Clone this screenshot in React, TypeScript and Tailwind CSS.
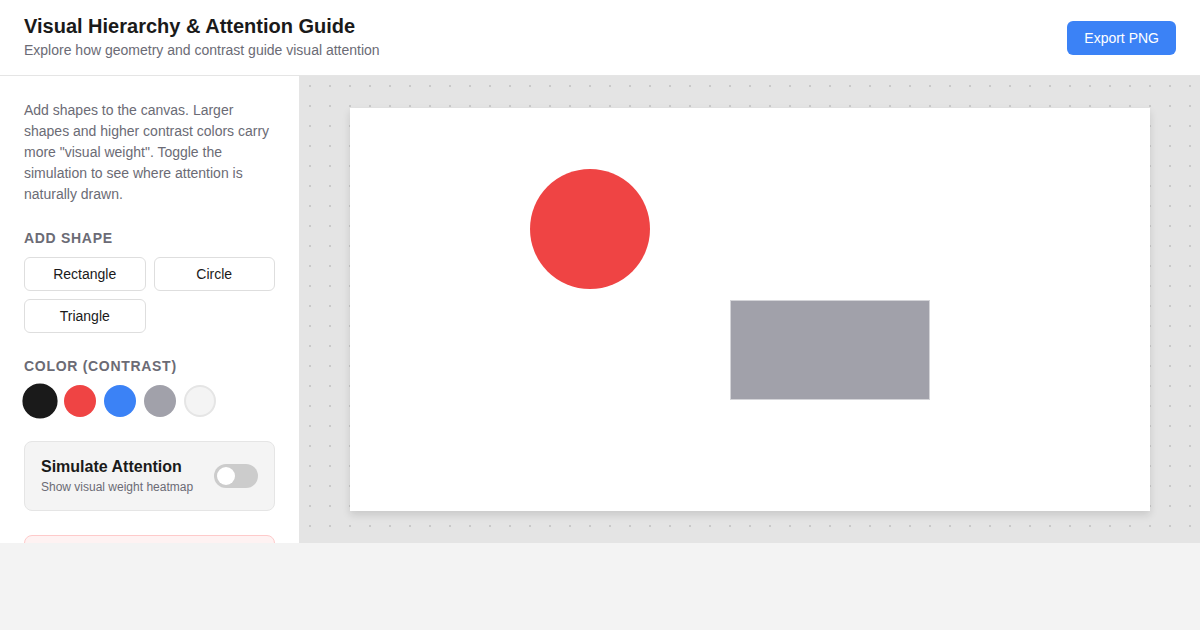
import React from "react";

export default function App() {
  const font = { fontFamily: '"Liberation Sans", Arial, sans-serif' };
  return (
    <div className="w-[1200px] h-[630px] bg-[#f3f3f3] text-[#1a1a1a]" style={font}>
      <header className="h-[76px] bg-white border-b border-[#e5e5e5] flex items-center justify-between px-6">
        <div className="flex flex-col">
          <h1 className="text-[20px] leading-[24px] font-bold text-[#1a1a1a] mt-[-1px]">Visual Hierarchy &amp; Attention Guide</h1>
          <p className="text-[14px] leading-[20px] text-[#6b6b75] mt-[2px]">Explore how geometry and contrast guide visual attention</p>
        </div>
        <button className="h-[34px] px-[17px] rounded-[6px] bg-[#3b82f6] text-white text-[14px] mt-[1px]">Export PNG</button>
      </header>
      <div className="flex h-[467px]">
        <aside className="w-[300px] shrink-0 bg-white border-r border-[#e5e5e5] overflow-hidden px-6 pt-[24px]">
          <p className="text-[14px] leading-[21px] text-[#6b6b75]">
            Add shapes to the canvas. Larger shapes and higher contrast colors carry more "visual weight". Toggle the simulation to see where attention is naturally drawn.
          </p>
          <h2 className="mt-[24px] text-[14px] leading-[18px] font-bold tracking-[0.05em] uppercase text-[#6b6b75]">Add Shape</h2>
          <div className="grid grid-cols-2 gap-2 mt-[10px]">
            <button className="h-[34px] border border-[#dedede] rounded-[6px] bg-white text-[14px] text-[#1a1a1a]">Rectangle</button>
            <button className="h-[34px] border border-[#dedede] rounded-[6px] bg-white text-[14px] text-[#1a1a1a]">Circle</button>
            <button className="h-[34px] border border-[#dedede] rounded-[6px] bg-white text-[14px] text-[#1a1a1a]">Triangle</button>
          </div>
          <h2 className="mt-[24px] text-[14px] leading-[18px] font-bold tracking-[0.05em] uppercase text-[#6b6b75]">Color (Contrast)</h2>
          <div className="flex gap-2 mt-[10px] items-center h-[32px]">
            <div className="w-[32px] h-[32px] rounded-full bg-[#1a1a1a] border-2 border-[#1a1a1a] scale-110"></div>
            <div className="w-[32px] h-[32px] rounded-full bg-[#ef4444] border-2 border-transparent"></div>
            <div className="w-[32px] h-[32px] rounded-full bg-[#3b82f6] border-2 border-transparent"></div>
            <div className="w-[32px] h-[32px] rounded-full bg-[#a1a1aa] border-2 border-transparent"></div>
            <div className="w-[32px] h-[32px] rounded-full bg-[#f4f4f4] border-2 border-[#e5e5e5]"></div>
          </div>
          <div className="mt-[24px] h-[70px] bg-[#f4f4f4] border border-[#e5e5e5] rounded-[8px] px-4 flex items-center justify-between">
            <div>
              <div className="text-[16px] leading-[20px] font-bold text-[#1a1a1a]">Simulate Attention</div>
              <div className="text-[12px] leading-[16px] text-[#6b6b75] mt-[2px]">Show visual weight heatmap</div>
            </div>
            <div className="w-[44px] h-[24px] rounded-full bg-[#cccccc] p-[3px] flex items-center">
              <div className="w-[18px] h-[18px] rounded-full bg-white"></div>
            </div>
          </div>
          <div className="mt-[24px] h-[80px] bg-[#fef2f2] border border-[#fecaca] rounded-[8px]"></div>
        </aside>
        <main
          className="flex-1 bg-[#e4e4e4] flex justify-center pt-[32px] overflow-hidden"
          style={{
            backgroundImage: "radial-gradient(circle at 10px 10px, #c9c9c9 1px, transparent 1.5px)",
            backgroundSize: "20px 20px",
          }}
        >
          <div className="relative w-[800px] h-[403px] bg-white shadow-[0_4px_8px_rgba(0,0,0,0.12)]">
            <div className="absolute left-[180px] top-[61px] w-[120px] h-[120px] rounded-full bg-[#ef4444]"></div>
            <div className="absolute left-[380px] top-[192px] w-[200px] h-[100px] bg-[#a1a1aa] border border-[#d4d4d8]"></div>
          </div>
        </main>
      </div>
    </div>
  );
}
